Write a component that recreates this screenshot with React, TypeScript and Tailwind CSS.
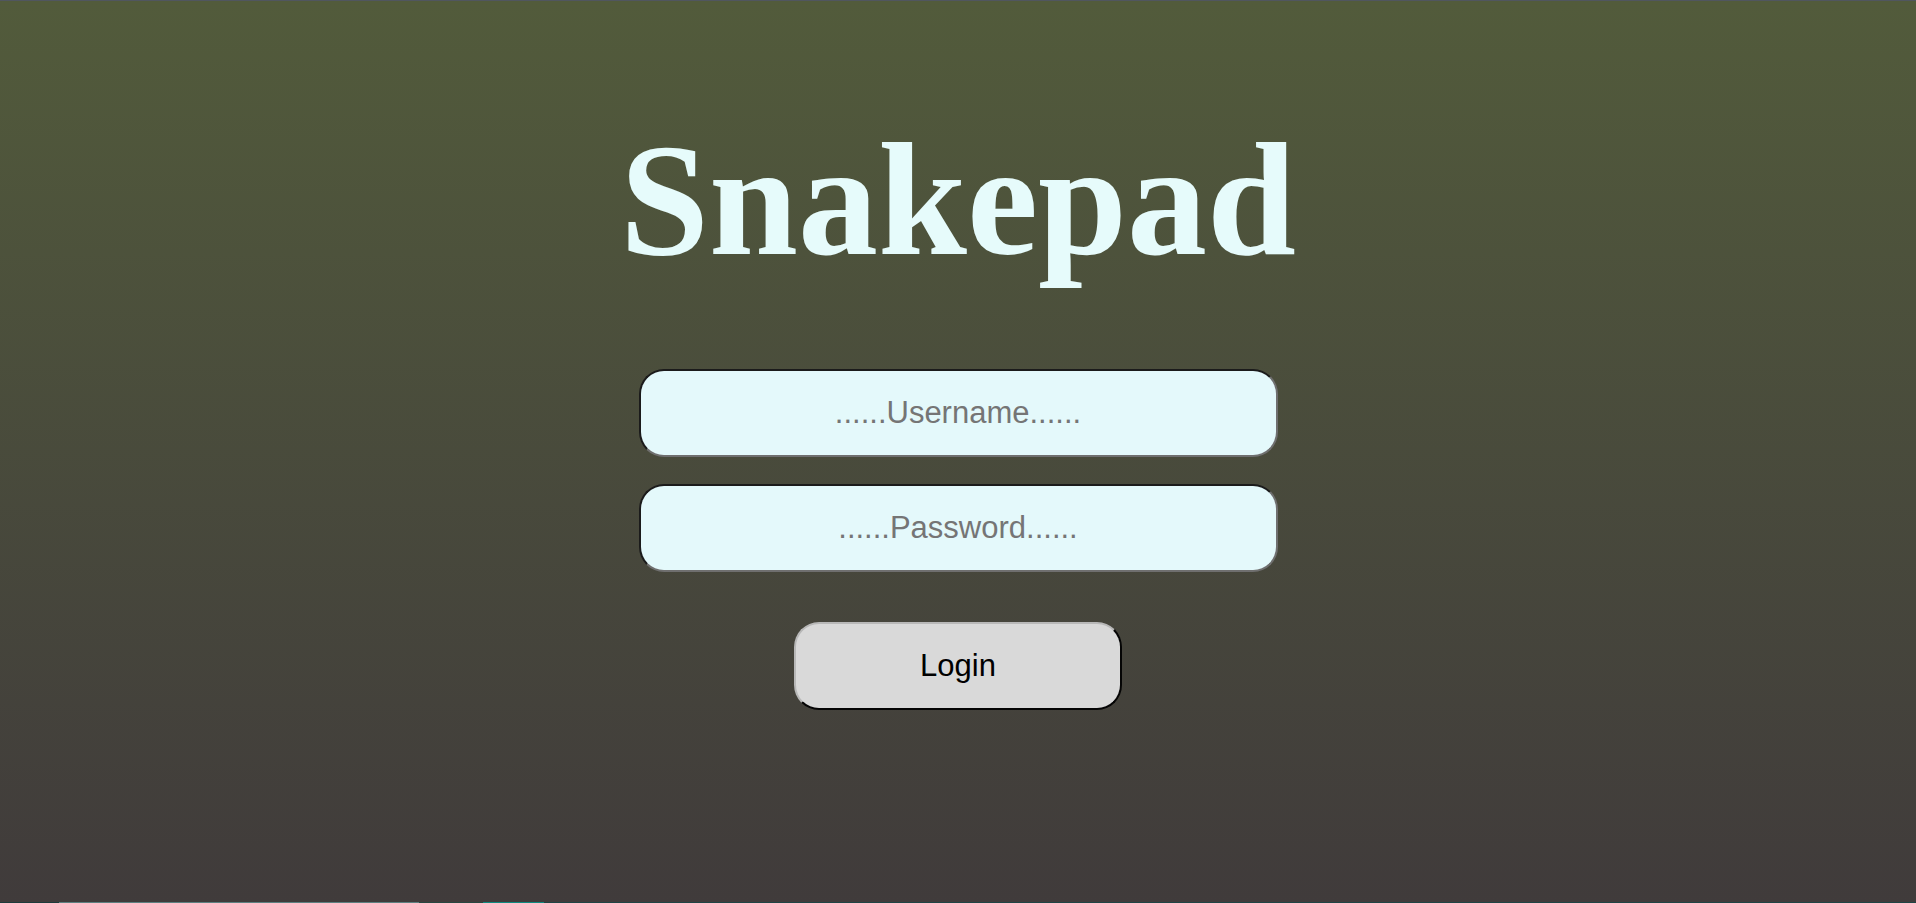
import React from "react";

export default function App() {
  return (
    <div className="flex h-[903px] w-full flex-col overflow-hidden">
      <div className="h-px w-full shrink-0 bg-[#50565f]" />
      <main className="flex flex-1 flex-col items-center bg-gradient-to-b from-[#525b3b] to-[#403b3b]">
        <h1
          className="mt-[119px] text-[160px] font-bold leading-none text-[#e6fbfb]"
          style={{ fontFamily: '"Liberation Serif", "Times New Roman", serif' }}
        >
          Snakepad
        </h1>
        <form
          className="mt-[89px] flex flex-col items-center"
          onSubmit={(e) => e.preventDefault()}
          style={{ fontFamily: '"Liberation Sans", Arial, sans-serif' }}
        >
          <input
            type="text"
            placeholder="......Username......"
            className="h-[88px] w-[639px] rounded-[25px] border-2 border-t-[#1b1b1b] border-l-[#1b1b1b] border-r-[#6f6f6f] border-b-[#6f6f6f] bg-[#e4f9fb] text-center text-[31px] text-[#333] outline-none placeholder:text-[#757575]"
          />
          <input
            type="password"
            placeholder="......Password......"
            className="mt-[27px] h-[88px] w-[639px] rounded-[25px] border-2 border-t-[#1b1b1b] border-l-[#1b1b1b] border-r-[#6f6f6f] border-b-[#6f6f6f] bg-[#e4f9fb] text-center text-[31px] text-[#333] outline-none placeholder:text-[#757575]"
          />
          <button
            type="submit"
            className="mt-[50px] h-[88px] w-[328px] rounded-[25px] border-2 border-t-[#b8b8b8] border-l-[#b8b8b8] border-r-[#050505] border-b-[#050505] bg-[#d9d9d9] text-[31px] text-black"
          >
            Login
          </button>
        </form>
      </main>
      <div className="flex h-px w-full shrink-0 bg-[#1f4444]">
        <div className="w-[59px] bg-[#1d3b3b]" />
        <div className="w-[360px] bg-[#5d8080]" />
        <div className="w-[64px] bg-[#284640]" />
        <div className="w-[61px] bg-[#0f8a80]" />
      </div>
    </div>
  );
}
